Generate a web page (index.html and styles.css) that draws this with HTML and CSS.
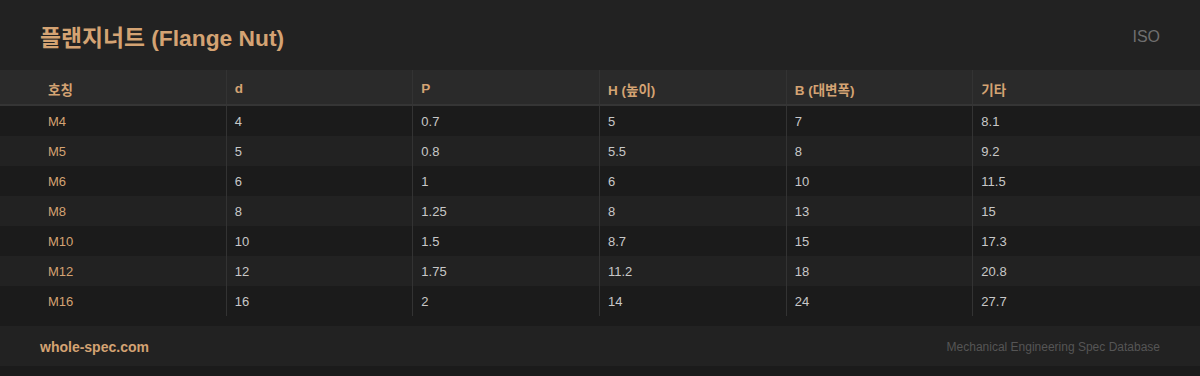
FILE: index.html
```html
<!DOCTYPE html>
<html lang="ko">
<head>
<meta charset="utf-8">
<link rel="stylesheet" href="styles.css">
</head>
<body>
<div class="page">
  <header class="top">
    <h1 class="title">플랜지너트 (Flange Nut)</h1>
    <span class="std">ISO</span>
  </header>
  <div class="table">
    <div class="row head">
      <div class="cell">호칭</div><div class="cell">d</div><div class="cell">P</div><div class="cell">H (높이)</div><div class="cell">B (대변폭)</div><div class="cell">기타</div>
    </div>
    <div class="row odd"><div class="cell name">M4</div><div class="cell">4</div><div class="cell">0.7</div><div class="cell">5</div><div class="cell">7</div><div class="cell">8.1</div></div>
    <div class="row even"><div class="cell name">M5</div><div class="cell">5</div><div class="cell">0.8</div><div class="cell">5.5</div><div class="cell">8</div><div class="cell">9.2</div></div>
    <div class="row odd"><div class="cell name">M6</div><div class="cell">6</div><div class="cell">1</div><div class="cell">6</div><div class="cell">10</div><div class="cell">11.5</div></div>
    <div class="row even"><div class="cell name">M8</div><div class="cell">8</div><div class="cell">1.25</div><div class="cell">8</div><div class="cell">13</div><div class="cell">15</div></div>
    <div class="row odd"><div class="cell name">M10</div><div class="cell">10</div><div class="cell">1.5</div><div class="cell">8.7</div><div class="cell">15</div><div class="cell">17.3</div></div>
    <div class="row even"><div class="cell name">M12</div><div class="cell">12</div><div class="cell">1.75</div><div class="cell">11.2</div><div class="cell">18</div><div class="cell">20.8</div></div>
    <div class="row odd"><div class="cell name">M16</div><div class="cell">16</div><div class="cell">2</div><div class="cell">14</div><div class="cell">24</div><div class="cell">27.7</div></div>
  </div>
  <footer class="foot">
    <span class="brand">whole-spec.com</span>
    <span class="tag">Mechanical Engineering Spec Database</span>
  </footer>
</div>
</body>
</html>
```
FILE: styles.css
```css
* { box-sizing: border-box; margin: 0; padding: 0; }
html, body { background: #1b1b1b; }
body {
  font-family: "Liberation Sans", Arial, "Noto Sans CJK KR", sans-serif;
  color: #c8c8c8;
}
.page { width: 1200px; height: 376px; overflow: hidden; }
.top {
  height: 70px;
  background: #222222;
  display: flex;
  align-items: center;
  justify-content: space-between;
  padding: 0 40px;
}
.title {
  font-size: 22.8px;
  font-weight: bold;
  color: #d4a373;
  padding-top: 2px;
}
.std { font-size: 16px; color: #6f6f6f; padding-top: 4px; }
.table { display: flex; flex-direction: column; }
.row {
  display: grid;
  grid-template-columns: repeat(6, 1fr);
  padding: 0 40px;
  height: 30px;
  font-size: 13px;
}
.row .cell { padding-top: 1px; }
.row.head {
  height: 36px;
  background: #2a2a2a;
  border-bottom: 2px solid #353535;
  font-weight: bold;
  font-size: 13.5px;
  color: #d4a373;
}
.row.head .cell { padding-top: 3px; }
.row.odd { background: #1b1b1b; }
.row.even { background: #222222; }
.cell {
  display: flex;
  align-items: center;
  padding-left: 8px;
  border-right: 1px solid #333333;
}
.cell:last-child { border-right: none; }
.cell.name { color: #d4a373; }
.foot {
  margin-top: 10px;
  height: 40px;
  background: #222222;
  display: flex;
  align-items: center;
  justify-content: space-between;
  padding: 1px 40px 0;
}
.brand { font-size: 14px; font-weight: bold; color: #d4a373; }
.tag { font-size: 12px; color: #555555; }
```
